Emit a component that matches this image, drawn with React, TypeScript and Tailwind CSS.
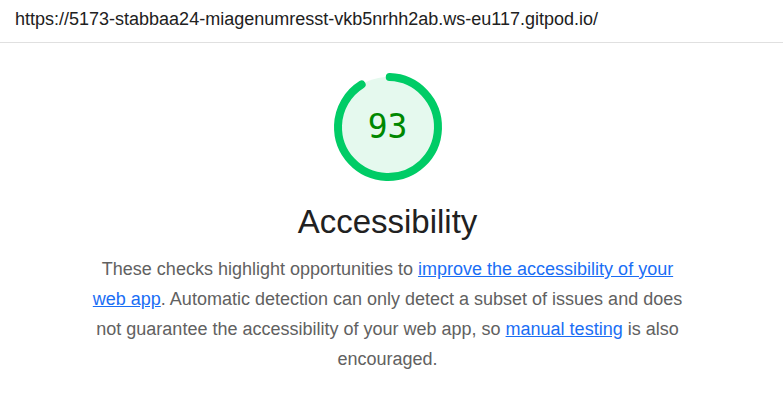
import React from 'react';

const Gauge: React.FC<{ score: number }> = ({ score }) => {
    const r = 50;
    const c = 2 * Math.PI * r;
    return (
        <div className="relative w-[112px] h-[112px]">
            <svg viewBox="0 0 112 112" className="w-full h-full">
                <circle cx="56" cy="56" r={r} fill="#e5f9ee" stroke="none" />
                <circle
                    cx="56"
                    cy="56"
                    r={r}
                    fill="none"
                    stroke="#00cc66"
                    strokeWidth="8"
                    strokeLinecap="round"
                    strokeDasharray={`${(score / 100) * c - 8} ${c}`}
                    transform="rotate(-88 56 56)"
                />
            </svg>
            <div className="absolute inset-0 flex items-center justify-center text-[#008800] text-[33px] font-['DejaVu_Sans_Mono',monospace]">
                {score}
            </div>
        </div>
    );
};

export default function App() {
    return (
        <div className="w-full min-h-screen bg-white font-['Liberation_Sans',Arial,sans-serif]">
            <div className="h-[43px] border-b border-[#e0e0e0] px-[15px] pt-[6px] text-[18px] text-[#212121]">
                https://5173-stabbaa24-miagenumresst-vkb5nrhh2ab.ws-eu117.gitpod.io/
            </div>
            <div className="flex flex-col items-center pt-[28px] pr-[8px]">
                <Gauge score={93} />
                <h1 className="mt-[19px] text-[33px] leading-[40px] text-[#212121]">Accessibility</h1>
                <p className="mt-[12px] max-w-[600px] text-center text-[18px] leading-[30px] text-[#616161]">
                    These checks highlight opportunities to{' '}
                    <a href="#" className="text-[#1a6ef5] underline">improve the accessibility of your web app</a>
                    . Automatic detection can only detect a subset of issues and does not guarantee the accessibility of your web app, so{' '}
                    <a href="#" className="text-[#1a6ef5] underline">manual testing</a> is also encouraged.
                </p>
            </div>
        </div>
    );
}
